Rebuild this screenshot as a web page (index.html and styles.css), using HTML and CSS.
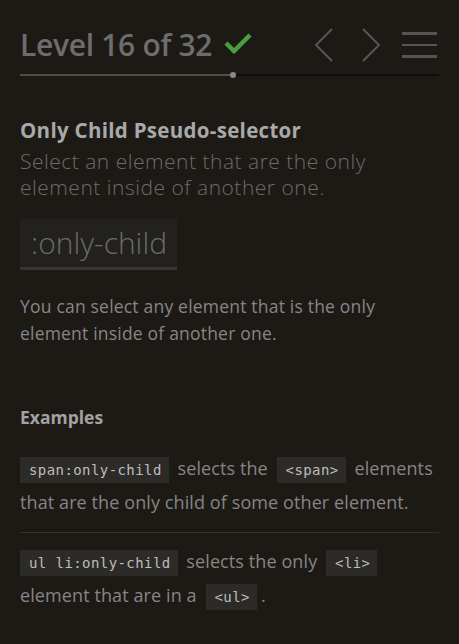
FILE: index.html
```html
<!DOCTYPE html>
<html>
<head>
<meta charset="utf-8">
<link rel="stylesheet" href="styles.css">
</head>
<body>
<div class="sidebar">
  <header class="level-header">
    <h2 class="level-title">Level 16 of 32
      <svg class="check" width="28" height="22" viewBox="0 0 28 22"><path d="M2 11 L10 19 L26 3" fill="none" stroke="#4a9e3f" stroke-width="4.5"/></svg>
    </h2>
    <nav class="level-nav">
      <svg class="arrow" width="20" height="34" viewBox="0 0 20 34"><path d="M18 1 L2 17 L18 33" fill="none" stroke="#555" stroke-width="2"/></svg>
      <svg class="arrow" width="20" height="34" viewBox="0 0 20 34"><path d="M2 1 L18 17 L2 33" fill="none" stroke="#555" stroke-width="2"/></svg>
      <svg class="menu" width="35" height="28" viewBox="0 0 35 28"><rect x="0" y="1" width="35" height="3" fill="#555"/><rect x="0" y="13" width="35" height="2" fill="#555"/><rect x="0" y="24" width="35" height="3" fill="#555"/></svg>
    </nav>
  </header>
  <div class="progress">
    <div class="progress-done"></div>
    <div class="progress-dot"></div>
    <div class="progress-rest"></div>
  </div>

  <section class="level">
    <h3 class="selector-name">Only Child Pseudo-selector</h3>
    <p class="title">Select an element that are the only element inside of another one.</p>
    <div class="syntax">:only-child</div>
    <p class="hint">You can select any element that is the only element inside of another one.</p>

    <h4 class="examples-title">Examples</h4>
    <div class="example"><code>span:only-child</code> selects the <code>&lt;span&gt;</code> <span>elements</span> <span>that are the only child of some other element.</span></div>
    <div class="example"><code>ul li:only-child</code> selects the only <code>&lt;li&gt;</code> element that are in a <code>&lt;ul&gt;</code>.</div>
  </section>
</div>
</body>
</html>
```

FILE: styles.css
```css
html, body {
  margin: 0;
  padding: 0;
  background: #1d1a16;
  height: 100%;
}
body {
  font-family: "Open Sans", "Noto Sans", sans-serif;
  color: #888;
}
.sidebar {
  padding: 0 20px;
}
.level-header {
  display: flex;
  align-items: center;
  justify-content: space-between;
  height: 75px;
}
.level-title {
  margin: 0;
  font-size: 30px;
  font-weight: 600;
  color: #6d6d6d;
  display: flex;
  align-items: center;
  gap: 12px;
  padding-top: 14px;
  letter-spacing: -0.3px;
}
.check { margin-top: -4px; }
.level-nav {
  display: flex;
  align-items: center;
  gap: 27px;
  padding-top: 14px;
  margin-right: 2px;
}
.level-nav .menu { margin-left: -6px; }
.progress {
  display: flex;
  align-items: center;
  height: 6px;
  margin-top: -3px;
}
.progress-done {
  width: 210px;
  height: 2px;
  background: #4f4d4a;
}
.progress-dot {
  width: 6px;
  height: 6px;
  border-radius: 50%;
  background: #888;
}
.progress-rest {
  flex: 1;
  height: 2px;
  background: #0f0d0b;
}
.level {
  padding-top: 39px;
}
.selector-name {
  margin: 0;
  font-size: 20.5px;
  font-weight: 700;
  color: #a9a9a9;
  line-height: 26px;
  letter-spacing: 0.3px;
}
.title {
  margin: 5px 0 0;
  max-width: 380px;
  font-size: 21px;
  font-weight: 300;
  color: #6b6b6b;
  line-height: 26px;
  letter-spacing: 0.5px;
}
.syntax {
  display: inline-block;
  margin-top: 19px;
  background: #23211d;
  border-bottom: 3px solid #383632;
  color: #6b6b6b;
  font-size: 30px;
  font-weight: 300;
  line-height: 48px;
  padding: 0 10px 0 11px;
}
.hint {
  margin: 23px 0 0;
  max-width: 370px;
  font-size: 17.5px;
  line-height: 27px;
  color: #868686;
  letter-spacing: 0.2px;
}
.examples-title {
  margin: 58px 0 0;
  font-size: 17.5px;
  font-weight: 700;
  color: #a2a2a2;
  line-height: 24px;
}
.example {
  font-size: 18px;
  line-height: 34px;
  color: #858585;
  padding: 0 0 13px;
  margin-top: 22px;
  border-bottom: 1px solid #34312d;
  letter-spacing: 0.1px;
}
.example + .example {
  margin-top: 11px;
  border-bottom: none;
}
.example code {
  display: inline-block;
  font-family: "DejaVu Sans Mono", monospace;
  font-size: 14px;
  letter-spacing: 0.42px;
  line-height: 26px;
  background: #2d2b27;
  color: #bdbdbd;
  padding: 0 7px 0 9px;
  margin: 0 4px 0 0;
}
.example code:not(:first-child) {
  margin: 0 4px;
}
```
